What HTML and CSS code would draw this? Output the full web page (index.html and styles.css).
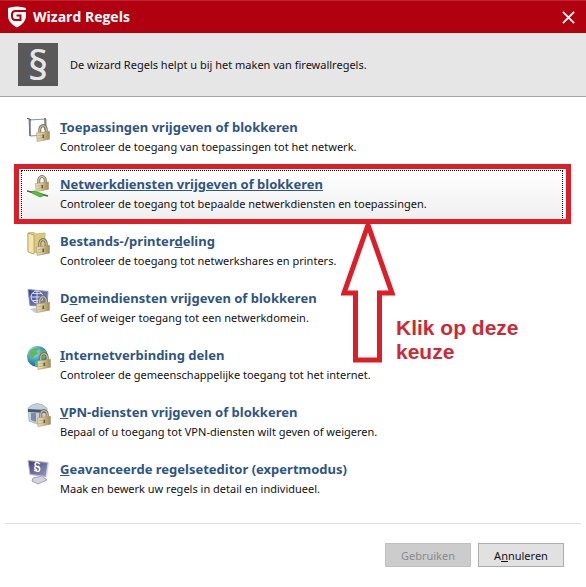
FILE: index.html
```html
<!DOCTYPE html>
<html lang="nl">
<head>
    <meta charset="UTF-8">
    <meta name="viewport" content="width=device-width, initial-scale=1.0">
    <title>Wizard Regels</title>
    <link rel="stylesheet" href="styles.css">
</head>
<body>
    <svg class="defs" width="0" height="0" aria-hidden="true">
        <defs>
            <linearGradient id="gold" x1="0" x2="1" y1="0" y2="0">
                <stop offset="0" stop-color="#efe4bc"/>
                <stop offset="0.5" stop-color="#d3c08e"/>
                <stop offset="1" stop-color="#9a8758"/>
            </linearGradient>
            <linearGradient id="screenBlue" x1="0" x2="1" y1="0" y2="1">
                <stop offset="0" stop-color="#2c3f9c"/>
                <stop offset="1" stop-color="#8f97c4"/>
            </linearGradient>
            <linearGradient id="screenGrey" x1="0" x2="1" y1="0" y2="1">
                <stop offset="0" stop-color="#3f3f78"/>
                <stop offset="1" stop-color="#9c9cc0"/>
            </linearGradient>
            <radialGradient id="globe" cx="0.35" cy="0.3" r="0.8">
                <stop offset="0" stop-color="#b9ecf5"/>
                <stop offset="0.5" stop-color="#3a9ac4"/>
                <stop offset="1" stop-color="#14508c"/>
            </radialGradient>
            <symbol id="lock" viewBox="0 0 13 16" preserveAspectRatio="none">
                <path d="M3.500 8V5a3 3.500 0 0 1 6 0v3" fill="none" stroke="#7a725a" stroke-width="2.800"/>
                <path d="M3.500 8V5a3 3.500 0 0 1 6 0v3" fill="none" stroke="#d5cdb4" stroke-width="1"/>
                <path d="M0.500 8l12-1.500v7l-11.500 2z" fill="url(#gold)" stroke="#a8966a" stroke-width="0.6"/>
                <path d="M1.500 10.500l10.500-1.500M1.500 13l10.500-1.500" stroke="#b5a274" stroke-width="0.6"/>
                <path d="M6 9.500h1.500v3h-1.500z" fill="#6a5b36"/>
            </symbol>
        </defs>
    </svg>

    <header class="titlebar">
        <svg class="logo" viewBox="0 0 20 22" aria-hidden="true">
            <path d="M1 2Q10-1 19 2V10Q19 17 10 21.500Q1 17 1 10Z" fill="#fff"/>
            <path d="M19 5H8.500Q5 5 5 8.500V10Q5 14 8.500 14H13.500V9.500H9.500" fill="none" stroke="#b1000f" stroke-width="2"/>
        </svg>
        <h1>Wizard Regels</h1>
        <button class="close" type="button" aria-label="Sluiten">
            <svg viewBox="0 0 14 14" aria-hidden="true"><path d="M1 1l12 12M13 1L1 13" stroke="#fff" stroke-width="2"/></svg>
        </button>
    </header>

    <div class="banner">
        <div class="paragraph-sign">§</div>
        <p>De wizard Regels helpt u bij het maken van firewallregels.</p>
    </div>

    <main class="rules">
        <div class="rule">
            <svg class="icon" viewBox="0 0 24 26" aria-hidden="true">
                <path d="M2 2l17-1v16l-16 1z" fill="#fff" stroke="#8b8f9e"/>
                <path d="M0 0l4 2M3 2v16M18 0v12" stroke="#5c6078" stroke-width="1.300"/>
                <use href="#lock" x="9" y="6" width="14" height="18"/>
            </svg>
            <div>
                <a href="#" class="rule-title"><u>T</u>oepassingen vrijgeven of blokkeren</a>
                <p>Controleer de toegang van toepassingen tot het netwerk.</p>
            </div>
        </div>
        <div class="rule selected">
            <svg class="icon" viewBox="0 0 24 26" aria-hidden="true">
                <path d="M0 16l21 5" stroke="#555" stroke-width="1.500"/>
                <path d="M3 17l5-1 10 4-5 2z" fill="#4fc43a" stroke="#2c8420" stroke-width="0.6"/>
                <use href="#lock" x="8" y="0" width="14" height="17"/>
            </svg>
            <div>
                <a href="#" class="rule-title">Netwerkdiensten vrijgeven of blokkeren</a>
                <p>Controleer de toegang tot bepaalde netwerkdiensten en toepassingen.</p>
            </div>
            <div class="marker"></div>
            <svg class="arrow" viewBox="0 0 54 144" aria-hidden="true">
                <path d="M27 6L3 74H14.500V141H38.500V74H51Z" fill="#fff" stroke="#dc1e28" stroke-width="5"/>
            </svg>
            <div class="hint">Klik op deze keuze</div>
        </div>
        <div class="rule">
            <svg class="icon" viewBox="0 0 24 26" aria-hidden="true">
                <path d="M1 1l5-1 3 2 9-1v18l-14 2-3-2z" fill="#dcc981" stroke="#c4b06c" stroke-width="0.8"/>
                <path d="M1 1l6 2v19l-6-2z" fill="#f1e5ac" stroke="#b39f5c" stroke-width="0.8"/>
                <use href="#lock" x="9" y="6" width="14" height="18"/>
            </svg>
            <div>
                <a href="#" class="rule-title">Bestands-/printer<u>d</u>eling</a>
                <p>Controleer de toegang tot netwerkshares en printers.</p>
            </div>
        </div>
        <div class="rule">
            <svg class="icon" viewBox="0 0 24 26" aria-hidden="true">
                <path d="M1 0.500l20 2-1 15-17-1z" fill="url(#screenBlue)" stroke="#8a8fae"/>
                <ellipse cx="10" cy="8" rx="6" ry="6" fill="none" stroke="#e8ecff"/>
                <path d="M4 8h12M10 2v12M5.500 4.500h9M5.500 11.500h9" stroke="#e8ecff" stroke-width="0.9"/>
                <path d="M3 20l8-2 5 4-8 2z" fill="#c9cad4"/>
                <use href="#lock" x="9" y="6" width="14" height="18"/>
            </svg>
            <div>
                <a href="#" class="rule-title">D<u>o</u>meindiensten vrijgeven of blokkeren</a>
                <p>Geef of weiger toegang tot een netwerkdomein.</p>
            </div>
        </div>
        <div class="rule">
            <svg class="icon" viewBox="0 0 24 26" aria-hidden="true">
                <circle cx="10.500" cy="10.500" r="10.500" fill="url(#globe)"/>
                <path d="M3 5q5-5 10-3l-3 3 1 3-4 2-1 4-4-3zM13 6l5-2 2 5-3 4-4-2zM8 15l5 1-2 5-3-1z" fill="#62b85c"/>
                <use href="#lock" x="10" y="6" width="14" height="18"/>
            </svg>
            <div>
                <a href="#" class="rule-title"><u>I</u>nternetverbinding delen</a>
                <p>Controleer de gemeenschappelijke toegang tot het internet.</p>
            </div>
        </div>
        <div class="rule">
            <svg class="icon" viewBox="0 0 24 26" aria-hidden="true">
                <path d="M1 5q9-9 19 0v13l-10 3-8-3z" fill="#c3d0df" stroke="#a5b4c6" stroke-width="0.8"/>
                <path d="M1 6l18 1v3l-18-1z" fill="#48566e"/>
                <path d="M4 10l5 0v9l-5-2z" fill="#7c8ba2"/>
                <use href="#lock" x="10" y="6" width="14" height="18"/>
            </svg>
            <div>
                <a href="#" class="rule-title"><u>V</u>PN-diensten vrijgeven of blokkeren</a>
                <p>Bepaal of u toegang tot VPN-diensten wilt geven of weigeren.</p>
            </div>
        </div>
        <div class="rule">
            <svg class="icon" viewBox="0 0 24 26" aria-hidden="true">
                <path d="M6 18l9-2 5 4-9 4-6-3z" fill="#d2d2e0" stroke="#8f8fa6" stroke-width="0.8"/>
                <path d="M1 0.500l20 2-2 14-16-2z" fill="url(#screenGrey)" stroke="#b9b9d0"/>
                <path d="M21 2l1 1-2 14-1-1z" fill="#d9d9e6"/>
                <path d="M13 4q-4-3-5 0 0 2 3 3 3 2 1 4-2 1-5-1M9 6q-3 2 1 4M11 6q3 2 1 4" fill="none" stroke="#fff" stroke-width="1.400"/>
            </svg>
            <div>
                <a href="#" class="rule-title"><u>G</u>eavanceerde regelseteditor (expertmodus)</a>
                <p>Maak en bewerk uw regels in detail en individueel.</p>
            </div>
        </div>
    </main>

    <footer class="buttons">
        <button type="button" disabled>Gebruiken</button>
        <button type="button">A<u>n</u>nuleren</button>
    </footer>
</body>
</html>
```
FILE: styles.css
```css
* {
    box-sizing: border-box;
}

body {
    margin: 0;
    font-family: "Noto Sans", "Open Sans", sans-serif;
    font-size: 11px;
    line-height: 18px;
    color: #111;
    background-color: #fff;
}

p {
    margin: 0;
}

.defs {
    position: absolute;
}

.titlebar {
    display: flex;
    align-items: center;
    gap: 6px;
    height: 33px;
    padding: 0 11px 0 7px;
    background-color: #b1000f;
    border-top: 1px solid #c02030;
    color: #fff;
}

.titlebar h1 {
    flex: 1;
    margin: 0;
    font-family: "Open Sans", sans-serif;
    font-size: 14px;
}

.logo {
    width: 20px;
    height: 22px;
}

.close {
    display: flex;
    padding: 0;
    border: none;
    background: none;
    cursor: pointer;
}

.close svg {
    width: 13px;
    height: 13px;
}

.banner {
    display: flex;
    align-items: center;
    gap: 12px;
    height: 64px;
    padding: 0 18px;
    background-color: #e6e6e6;
    border-bottom: 1px solid #a6a6a6;
}

.paragraph-sign {
    width: 40px;
    height: 43px;
    background-color: #595959;
    color: #e6e6e6;
    font-size: 40px;
    font-weight: 500;
    line-height: 44px;
    text-align: center;
}

.rules {
    display: flex;
    flex-direction: column;
    gap: 5px;
    padding: 16px 23px 0 21px;
}

.rule {
    position: relative;
    display: flex;
    gap: 9px;
    height: 52px;
    padding: 4px 5px;
    border: 1px solid transparent;
}

.rule.selected {
    border: 1px dotted #000;
    background: linear-gradient(#fff, #eee);
}

.icon {
    width: 24px;
    height: 26px;
}

.rule p {
    margin-top: 1px;
}

.rule-title {
    font-size: 13px;
    font-weight: bold;
    color: #2f5583;
    text-decoration: none;
}

.selected .rule-title,
.rule-title:hover {
    text-decoration: underline;
}

.marker {
    position: absolute;
    top: -7px;
    right: -9px;
    bottom: -3px;
    left: -8px;
    border: 5px solid #dc1e28;
}

.arrow {
    position: absolute;
    top: 48px;
    left: 319px;
    width: 54px;
    height: 144px;
}

.hint {
    position: absolute;
    top: 145px;
    left: 374px;
    width: 140px;
    font-family: "Liberation Sans", Arial, sans-serif;
    font-size: 21px;
    font-weight: bold;
    line-height: 24px;
    color: #cc2936;
}

.buttons {
    display: flex;
    justify-content: flex-end;
    gap: 7px;
    margin: 16px 5px 0;
    padding: 19px 17px;
    border-top: 1px solid #dfdfdf;
}

.buttons button {
    width: 86px;
    height: 24px;
    padding: 0;
    border: 1px solid #adadad;
    background-color: #e1e1e1;
    color: #111;
    font-family: inherit;
    font-size: 11px;
}

.buttons button:disabled {
    border-color: #bfbfbf;
    background-color: #ccc;
    color: #8a8a8a;
}
```
